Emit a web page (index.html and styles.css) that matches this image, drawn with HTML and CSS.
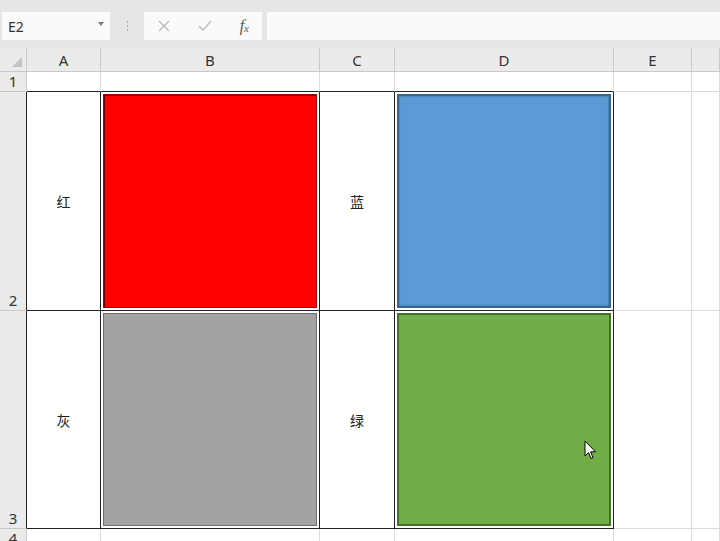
FILE: index.html
```html
<!DOCTYPE html>
<html>
<head>
<meta charset="utf-8">
<link rel="stylesheet" href="styles.css">
</head>
<body>
<div class="toolbar">
  <div class="namebox"><span class="ref">E2</span><span class="caret"></span></div>
  <div class="dots"><i></i><i></i><i></i></div>
  <div class="fxbox">
    <svg class="ico" width="14" height="14" viewBox="0 0 14 14"><path d="M2 2 L12 12 M12 2 L2 12" stroke="#b8b8b8" stroke-width="1.3" fill="none"/></svg>
    <svg class="ico" width="16" height="14" viewBox="0 0 16 14"><path d="M2 7 L6 11 L14 2" stroke="#b8b8b8" stroke-width="1.3" fill="none"/></svg>
    <span class="fx">f<sub>x</sub></span>
  </div>
  <div class="finput"></div>
</div>
<div class="sheet">
  <div class="hd corner"><span class="tri"></span></div>
  <div class="hd col">A</div>
  <div class="hd col">B</div>
  <div class="hd col">C</div>
  <div class="hd col">D</div>
  <div class="hd col">E</div>
  <div class="hd col"></div>

  <div class="hd row">1</div>
  <div class="c topb"></div>
  <div class="c topb"></div>
  <div class="c topb"></div>
  <div class="c topb"></div>
  <div class="c"></div>
  <div class="c"></div>

  <div class="hd row leftb">2</div>
  <div class="c tb lbl">红</div>
  <div class="c tb sh"><div class="shape red"></div></div>
  <div class="c tb lbl">蓝</div>
  <div class="c tb sh"><div class="shape blue"></div></div>
  <div class="c"></div>
  <div class="c"></div>

  <div class="hd row leftb">3</div>
  <div class="c tb lbl">灰</div>
  <div class="c tb sh"><div class="shape gray"></div></div>
  <div class="c tb lbl">绿</div>
  <div class="c tb sh"><div class="shape green"></div></div>
  <div class="c"></div>
  <div class="c"></div>

  <div class="hd row">4</div>
  <div class="c"></div>
  <div class="c"></div>
  <div class="c"></div>
  <div class="c"></div>
  <div class="c"></div>
  <div class="c"></div>
</div>
<svg class="cursor" width="14" height="21" viewBox="0 0 14 21"><path d="M1 1 L1 16 L4.5 12.5 L7 18.5 L9 17.7 L6.6 11.8 L11.5 11.8 Z" fill="#fff" stroke="#000" stroke-width="1" stroke-linejoin="round"/></svg>
</body>
</html>
```
FILE: styles.css
```css
html, body {
  margin: 0;
  padding: 0;
  width: 720px;
  height: 541px;
  overflow: hidden;
  background: #ffffff;
  font-family: "Noto Sans", "Noto Sans CJK SC", sans-serif;
  position: relative;
}
.toolbar {
  height: 48px;
  background: #e6e6e6;
  display: flex;
  align-items: flex-start;
  padding: 12px 0 0 2px;
  box-sizing: border-box;
}
.namebox {
  width: 108px;
  height: 28px;
  background: #fafafa;
  display: flex;
  align-items: center;
  justify-content: space-between;
  padding: 0 6px 0 6px;
  box-sizing: border-box;
}
.ref {
  font-size: 14px;
  color: #333;
}
.caret {
  width: 0;
  height: 0;
  border-left: 3.5px solid transparent;
  border-right: 3.5px solid transparent;
  border-top: 4px solid #777;
  margin-top: -4px;
}
.dots {
  width: 34px;
  height: 28px;
  display: flex;
  flex-direction: column;
  align-items: center;
  justify-content: center;
  gap: 2px;
}
.dots i {
  display: block;
  width: 1px;
  height: 2px;
  background: #b0b0b0;
}
.fxbox {
  width: 118px;
  height: 28px;
  background: #fafafa;
  display: flex;
  align-items: center;
  justify-content: space-between;
  padding: 0 13px 0 13px;
  box-sizing: border-box;
}
.fx {
  font-family: "Liberation Serif", serif;
  font-style: italic;
  font-size: 16px;
  color: #555;
  line-height: 1;
}
.fx sub {
  font-size: 11px;
  vertical-align: -1px;
}
.finput {
  flex: 1;
  height: 28px;
  margin-left: 5px;
  background: #fafafa;
}
.sheet {
  display: grid;
  grid-template-columns: 27px 74px 219px 75px 219px 78px 1fr;
  grid-template-rows: 24px 20px 219px 218px 1fr;
  height: 493px;
}
.hd {
  background: #ebebeb;
  color: #333;
  font-size: 15px;
  box-sizing: border-box;
  border-right: 1px solid #c9c9c9;
  border-bottom: 1px solid #c9c9c9;
}
.col {
  display: flex;
  align-items: center;
  justify-content: center;
  padding-top: 1px;
}
.corner {
  position: relative;
}
.tri {
  position: absolute;
  right: 4px;
  bottom: 4px;
  width: 0;
  height: 0;
  border-left: 10px solid transparent;
  border-bottom: 10px solid #c4c4c4;
}
.row {
  display: flex;
  align-items: flex-end;
  justify-content: center;
  line-height: 19px;
}
.leftb {
  border-right: 1px solid #222;
}
.c {
  box-sizing: border-box;
  border-right: 1px solid #dcdcdc;
  border-bottom: 1px solid #dcdcdc;
}
.topb {
  border-bottom: 1px solid #222;
}
.tb {
  border-right: 1px solid #222;
  border-bottom: 1px solid #222;
}
.lbl {
  display: flex;
  align-items: center;
  justify-content: center;
  font-family: "Noto Sans CJK SC", sans-serif;
  font-size: 14px;
  color: #222;
}
.sh {
  padding: 2px;
  display: flex;
}
.shape {
  flex: 1;
  box-sizing: border-box;
}
.red {
  background: #ff0000;
  border: 1px solid #a00000;
  box-shadow: inset 1px 1px 0 #700000;
}
.blue {
  background: #5b9bd5;
  border: 2px solid #3a6590;
  box-shadow: inset 0 0 2px #2f5478;
}
.gray {
  background: #a3a3a5;
  border: 1px solid #6f6f70;
}
.green {
  background: #70ad47;
  border: 2px solid #466f2c;
}
.cursor {
  position: absolute;
  left: 584px;
  top: 440px;
}
```
